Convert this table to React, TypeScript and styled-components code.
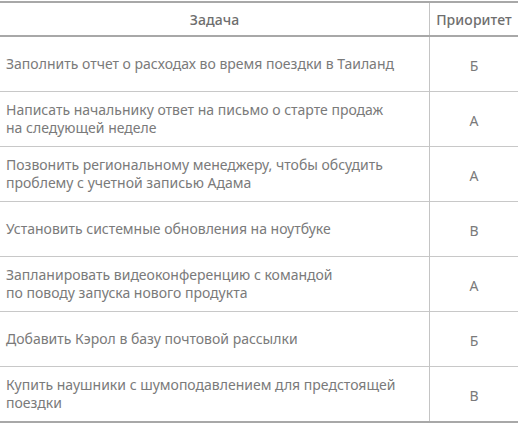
import React from "react";
import styled, { createGlobalStyle } from "styled-components";

const Global = createGlobalStyle`
  html, body { margin: 0; padding: 0; background: #fff; }
  body { font-family: "Noto Sans", "Open Sans", sans-serif; }
`;

const Table = styled.table`
  width: 518px;
  border-collapse: collapse;
  margin-top: 1px;
  border-top: 2px solid #a8a8a8;
  border-bottom: 2px solid #a8a8a8;
  font-size: 14px;
  color: #7a7a7a;
`;

const HeadCell = styled.th<{ $narrow?: boolean }>`
  height: 32px;
  padding: 0 6px;
  border-bottom: 2px solid #a8a8a8;
  border-left: ${(p) => (p.$narrow ? "1px solid #c4c4c4" : "none")};
  width: ${(p) => (p.$narrow ? "76px" : "auto")};
  font-weight: 500;
  color: #6e6e6e;
  text-align: center;
  letter-spacing: 0.1px;
`;

const Row = styled.tr`
  & + & td { border-top: 1px solid #c8c8c8; }
`;

const TaskCell = styled.td`
  height: 54px;
  padding: 0 6px;
  line-height: 18px;
  text-align: left;
  vertical-align: middle;
  letter-spacing: 0;
`;

const PriorityCell = styled.td`
  border-left: 1px solid #c4c4c4;
  text-align: center;
  vertical-align: middle;
  padding: 3px 0 0;
`;

const rows: [string, string][] = [
  ["Заполнить отчет о расходах во время поездки в Таиланд", "Б"],
  ["Написать начальнику ответ на письмо о старте продаж\nна следующей неделе", "A"],
  ["Позвонить региональному менеджеру, чтобы обсудить\nпроблему с учетной записью Адама", "A"],
  ["Установить системные обновления на ноутбуке", "B"],
  ["Запланировать видеоконференцию с командой\nпо поводу запуска нового продукта", "A"],
  ["Добавить Кэрол в базу почтовой рассылки", "Б"],
  ["Купить наушники с шумоподавлением для предстоящей\nпоездки", "B"],
];

export default function App() {
  return (
    <>
      <Global />
      <Table>
        <thead>
          <tr>
            <HeadCell>Задача</HeadCell>
            <HeadCell $narrow>Приоритет</HeadCell>
          </tr>
        </thead>
        <tbody>
          {rows.map(([task, pr], i) => (
            <Row key={i}>
              <TaskCell>
                {task.split("\n").map((line, j) => (
                  <React.Fragment key={j}>
                    {j > 0 && <br />}
                    {line}
                  </React.Fragment>
                ))}
              </TaskCell>
              <PriorityCell>{pr}</PriorityCell>
            </Row>
          ))}
        </tbody>
      </Table>
    </>
  );
}
